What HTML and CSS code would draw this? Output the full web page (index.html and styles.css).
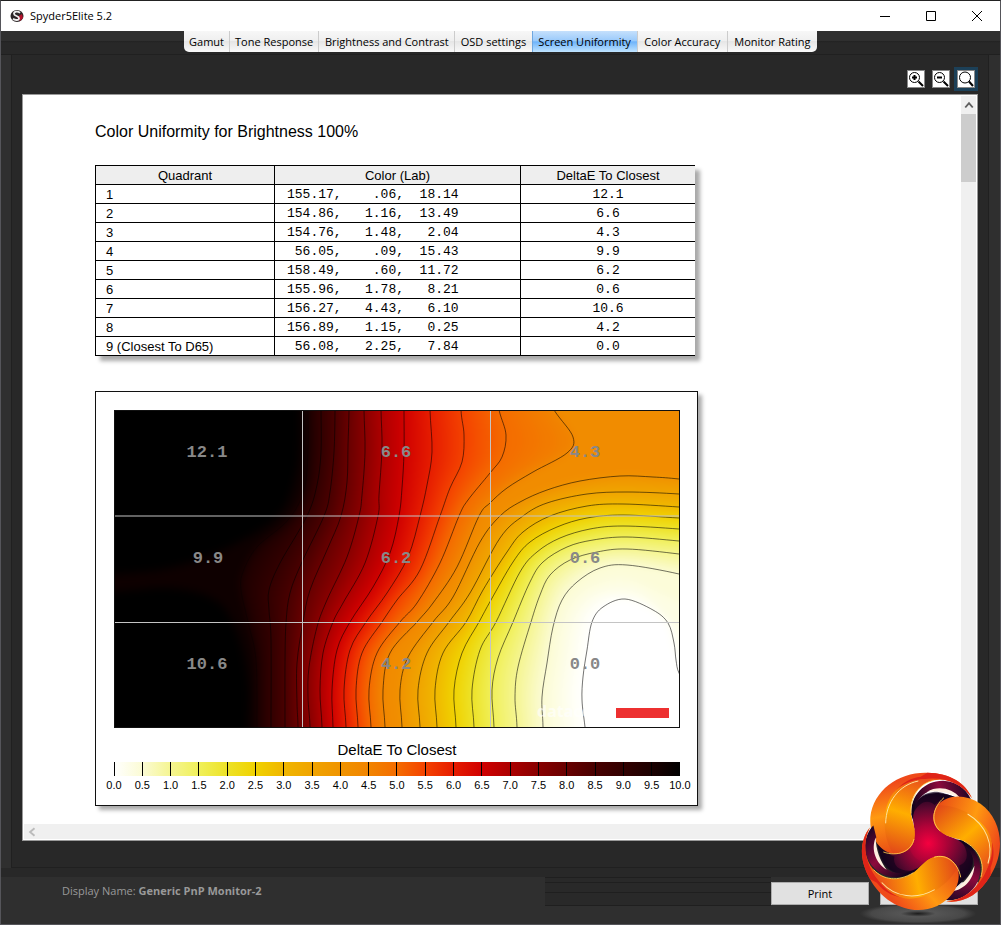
FILE: index.html
```html
<!DOCTYPE html>
<html lang="en">
<head>
<meta charset="utf-8">
<title>Spyder5Elite 5.2</title>
<link rel="stylesheet" href="styles.css">
</head>
<body>
<div class="window">
  <header class="titlebar">
    <svg class="app-icon" viewBox="0 0 14 14" aria-hidden="true">
      <ellipse cx="7" cy="7" rx="6.5" ry="6" fill="#2b2526"/>
      <path d="M7 8l5-3 1 4-3 3z" fill="#b3122c"/>
      <path d="M10 3.8C8 2 4 2.3 4 4.8C4 7.5 9 6.5 9 9.2C9 11.5 5 11.5 3 9.8" fill="none" stroke="#eee" stroke-width="1.8"/>
    </svg>
    <h1 class="app-name">Spyder5Elite 5.2</h1>
    <div class="window-controls">
      <button type="button" aria-label="Minimize"><svg viewBox="0 0 12 12"><path d="M1 6.5h10"/></svg></button>
      <button type="button" aria-label="Maximize"><svg viewBox="0 0 12 12"><path d="M1.5 1.5h9v9h-9z"/></svg></button>
      <button type="button" aria-label="Close"><svg viewBox="0 0 12 12"><path d="M1 1l10 10M11 1L1 11"/></svg></button>
    </div>
  </header>

  <nav class="tabbar">
    <div class="tabs">
      <button type="button">Gamut</button>
      <button type="button">Tone Response</button>
      <button type="button">Brightness and Contrast</button>
      <button type="button">OSD settings</button>
      <button type="button" class="active">Screen Uniformity</button>
      <button type="button">Color Accuracy</button>
      <button type="button">Monitor Rating</button>
    </div>
  </nav>

  <main class="panel">
    <div class="zoom-tools">
      <button type="button" aria-label="Zoom in"><svg viewBox="0 0 16 16"><circle cx="6.5" cy="6.5" r="5"/><path d="M4 6.5h5M6.5 4v5" stroke-width="2"/><path d="M10.5 10.5l4.5 4.5" stroke-width="2"/></svg></button>
      <button type="button" aria-label="Zoom out"><svg viewBox="0 0 16 16"><circle cx="6.5" cy="6.5" r="5"/><path d="M4 6.5h5" stroke-width="2"/><path d="M10.5 10.5l4.5 4.5" stroke-width="2"/></svg></button>
      <button type="button" class="selected" aria-label="Actual size"><svg viewBox="0 0 16 16"><circle cx="7" cy="6.5" r="5.5"/><path d="M11 10.5l4 4.5" stroke-width="2"/></svg></button>
    </div>

    <div class="viewer">
      <div class="report">
        <h2>Color Uniformity for Brightness 100%</h2>
        <table class="results">
          <thead><tr><th>Quadrant</th><th>Color (Lab)</th><th>DeltaE To Closest</th></tr></thead>
          <tbody>
            <tr><td>1</td><td>155.17,    .06,  18.14</td><td>12.1</td></tr>
            <tr><td>2</td><td>154.86,   1.16,  13.49</td><td>6.6</td></tr>
            <tr><td>3</td><td>154.76,   1.48,   2.04</td><td>4.3</td></tr>
            <tr><td>4</td><td> 56.05,    .09,  15.43</td><td>9.9</td></tr>
            <tr><td>5</td><td>158.49,    .60,  11.72</td><td>6.2</td></tr>
            <tr><td>6</td><td>155.96,   1.78,   8.21</td><td>0.6</td></tr>
            <tr><td>7</td><td>156.27,   4.43,   6.10</td><td>10.6</td></tr>
            <tr><td>8</td><td>156.89,   1.15,   0.25</td><td>4.2</td></tr>
            <tr><td>9 (Closest To D65)</td><td> 56.08,   2.25,   7.84</td><td>0.0</td></tr>
          </tbody>
        </table>

        <figure class="chart">
          <svg class="plot" viewBox="114 410 566 318" role="img" aria-label="DeltaE To Closest">
            <defs>
              <filter id="soften" filterUnits="userSpaceOnUse" x="60" y="350" width="700" height="440" color-interpolation-filters="sRGB"><feGaussianBlur stdDeviation="4"/></filter>
            </defs>
            <rect x="114" y="410" width="566" height="318" fill="#000"/>
            <g id="field" filter="url(#soften)"></g>
            <g id="contours" fill="none" stroke="#000" stroke-opacity=".55"></g>
            <path d="M302.5 411v316M490.5 411v316M115 516h564M115 622.5h564" stroke="#c4c4c4" fill="none"/>
            <g class="plot-values">
              <text x="207" y="457">12.1</text><text x="396" y="457">6.6</text><text x="585" y="457">4.3</text>
              <text x="208" y="563">9.9</text><text x="396" y="563">6.2</text><text x="585" y="563">0.6</text>
              <text x="207" y="669">10.6</text><text x="396" y="669">4.2</text><text x="585" y="669">0.0</text>
            </g>
            <text class="brand" x="537" y="717">datacolor</text>
            <rect x="616" y="708" width="53" height="10" fill="#ed3030"/>
            <rect x="114.5" y="410.5" width="565" height="317" fill="none" stroke="#111"/>
          </svg>
          <figcaption>DeltaE To Closest</figcaption>
          <div class="scale">
            <ul>
              <li>0.0</li><li>0.5</li><li>1.0</li><li>1.5</li><li>2.0</li><li>2.5</li><li>3.0</li>
              <li>3.5</li><li>4.0</li><li>4.5</li><li>5.0</li><li>5.5</li><li>6.0</li><li>6.5</li>
              <li>7.0</li><li>7.5</li><li>8.0</li><li>8.5</li><li>9.0</li><li>9.5</li><li>10.0</li>
            </ul>
          </div>
        </figure>
      </div>
      <div class="scroll-y"><svg viewBox="0 0 8 8"><path d="M1 6l3-3.5L7 6"/></svg><div class="thumb"></div></div>
      <div class="scroll-x"><svg viewBox="0 0 8 8"><path d="M6 1L2.5 4L6 7"/></svg></div>
    </div>
  </main>

  <footer class="footer">
    <p class="display-name">Display Name: <strong>Generic PnP Monitor-2</strong></p>
    <div class="grooves"></div>
    <div class="actions"><button type="button">Print</button><button type="button" aria-label="Close"></button></div>
  </footer>

  <svg class="emblem" viewBox="0 0 453 480" aria-hidden="true">
    <defs>
      <radialGradient id="shade"><stop offset="0" stop-color="#1c1c1c"/><stop offset=".3" stop-color="#555"/><stop offset=".8" stop-color="#484848"/><stop offset="1" stop-color="#444" stop-opacity="0"/></radialGradient>
      <radialGradient id="core" gradientUnits="userSpaceOnUse" cx="235" cy="235" r="150"><stop offset="0" stop-color="#f5003f"/><stop offset=".35" stop-color="#b00338"/><stop offset=".7" stop-color="#5c0830"/><stop offset="1" stop-color="#16041e"/></radialGradient>
      <linearGradient id="band" gradientUnits="userSpaceOnUse" x1="190" y1="130" x2="365" y2="90"><stop offset="0" stop-color="#12031c"/><stop offset=".5" stop-color="#8c0a3c"/><stop offset="1" stop-color="#1a0524"/></linearGradient>
      <linearGradient id="flameB" gradientUnits="userSpaceOnUse" x1="90" y1="60" x2="130" y2="265"><stop offset="0" stop-color="#ef4a1a"/><stop offset=".45" stop-color="#ff9a10"/><stop offset="1" stop-color="#e94c16"/></linearGradient>
      <linearGradient id="flameC" gradientUnits="userSpaceOnUse" x1="200" y1="30" x2="125" y2="260"><stop offset="0" stop-color="#e84a1c"/><stop offset=".5" stop-color="#ffae00"/><stop offset="1" stop-color="#e34a18"/></linearGradient>
      <g id="arm"><path d="M190 250C203 205 185 170 188 145C192 92 244 62 335 104C292 103 258 125 256 165C255 196 280 222 310 236L238 250Z" fill="url(#core)"/><path d="M188 150C190 108 215 80 262 80C285 84 310 94 330 102C290 98 268 104 254 120C232 100 204 112 188 150Z" fill="#14031c" fill-opacity=".7"/></g>
      <g id="petal">
        <path d="M184 150C180 90 225 46 280 47C328 50 357 80 366 112L331 102C312 77 270 64 234 80C205 93 190 125 189 165Z" fill="url(#band)"/>
        <path d="M231 80C263 62 307 68 331 100C300 82 262 76 231 80Z" fill="#fff0e0"/>
        <path d="M130 267C85 257 58 213 61 157C70 74 148 20 232 23C300 24 348 54 366 100C335 55 293 39 251 46C210 55 180 91 182 139C184 170 199 190 193 222C187 253 160 269 130 267Z" fill="url(#flameB)"/>
        <path d="M232 23C300 24 348 54 366 100C333 48 263 27 190 49C150 63 118 100 108 145C118 87 155 42 212 35Z" fill="#df2418"/>
        <path d="M130 267C92 210 94 105 146 68C180 43 222 38 251 46C210 55 180 91 182 139C184 170 199 190 193 222C187 253 160 269 130 267Z" fill="url(#flameC)"/>
        <path d="M107 175C108 112 146 60 205 48" fill="none" stroke="#ffe3a0" stroke-width="3"/>
        <path d="M100 261C142 276 184 260 192 222M183 145C181 91 210 55 251 46" fill="none" stroke="#ffcf50" stroke-width="2.5"/>
      </g>
    </defs>
    <ellipse cx="204" cy="446" rx="175" ry="30" fill="url(#shade)"/>
    <use href="#arm"/><use href="#arm" transform="rotate(120 238 232)"/><use href="#arm" transform="rotate(240 238 232)"/>
    <circle cx="235" cy="235" r="58" fill="url(#core)"/>
    <use href="#petal"/><use href="#petal" transform="rotate(120 238 232)"/><use href="#petal" transform="rotate(240 238 232)"/>
  </svg>
</div>
<script src="chart.js"></script>
</body>
</html>
```

FILE: chart.js
```js
// Each contour: DeltaE level followed by its x,y points, from the top or right edge to the bottom edge.
const contours = [
  [10, [300,370, 300,410, 300,440, 296,475, 278,516, 227,548, 170,568, 114,574, 80,574, 80,592, 114,592, 170,588, 215,600, 236,630, 248,680, 248,727, 248,770]],
  [9.5, [308,370, 308,410, 308,450, 304,490, 288,520, 257,547, 243,572, 241,590, 248,622, 256,660, 257,727, 257,770]],
  [9, [321,370, 321,410, 321,452, 317,485, 307,516, 280,563, 269,590, 269,610, 271,640, 271,727, 271,770]],
  [8.5, [335,370, 335,410, 334,452, 330,492, 324,516, 302,562, 290,593, 286,623, 285,663, 285,727, 285,770]],
  [8, [349,370, 349,410, 348,445, 347,482, 341,516, 327,550, 310,590, 303,622, 297,663, 297,703, 298,727, 298,770]],
  [7.5, [364,370, 364,410, 365,452, 362,495, 359,516, 347,557, 327,600, 317,627, 309,667, 308,697, 310,727, 310,770]],
  [7, [381,370, 381,410, 382,448, 379,495, 378,516, 365,563, 343,603, 333,622, 323,653, 320,690, 322,727, 322,770]],
  [6.5, [404,370, 404,410, 404,452, 402,488, 399,516, 390,553, 373,587, 350,622, 337,650, 332,690, 333,727, 333,770]],
  [6, [430,370, 430,410, 432,452, 427,485, 420,516, 408,557, 387,593, 366,622, 350,650, 344,690, 346,727, 346,770]],
  [5.5, [461,370, 461,410, 464,435, 462,462, 450,488, 440,516, 420,570, 397,600, 382,622, 362,653, 356,690, 358,727, 358,770]],
  [5, [490,370, 499,410, 506,435, 502,457, 490,473, 468,500, 459,516, 440,563, 417,603, 400,622, 377,653, 369,690, 371,727, 371,770]],
  [4.5, [530,370, 554,410, 573,437, 567,453, 533,472, 507,488, 490,503, 479,516, 457,567, 433,603, 417,622, 390,653, 383,690, 385,727, 385,770]],
  [4, [720,484, 679,479, 653,477, 620,476, 580,481, 547,490, 520,502, 500,516, 480,542, 453,597, 433,622, 408,657, 400,690, 402,727, 402,770]],
  [3.5, [720,498, 679,494, 627,492, 587,494, 547,503, 523,516, 500,538, 470,593, 449,622, 427,653, 418,690, 420,727, 420,770]],
  [3, [720,510, 679,507, 623,504, 587,506, 550,516, 523,532, 507,552, 483,590, 466,622, 443,653, 435,690, 437,727, 437,770]],
  [2.5, [720,520, 679,518, 623,515, 587,518, 557,527, 530,542, 513,562, 491,600, 479,622, 462,653, 454,690, 456,727, 456,770]],
  [2, [720,533, 679,529, 623,526, 590,529, 560,538, 537,552, 520,572, 496,622, 480,650, 472,690, 474,727, 474,770]],
  [1.5, [720,545, 679,541, 627,537, 593,540, 567,547, 543,562, 530,582, 513,622, 498,658, 492,690, 494,727, 494,770]],
  [1, [720,560, 679,554, 627,549, 597,552, 570,560, 550,575, 540,595, 531,622, 518,667, 515,697, 517,727, 517,770]],
  [0.5, [720,586, 679,574, 627,565, 600,568, 577,582, 562,600, 553,627, 547,663, 542,697, 543,727, 543,770]],
  [0, [720,720, 690,690, 679,673, 676,660, 674,643, 668,623, 653,610, 625,599, 603,607, 592,622, 587,650, 583,677, 582,700, 585,727, 590,770]]
];

const ramp = [
  [255,255,255], [251,251,212], [245,245,145], [240,240,90], [237,226,40], [240,210,0], [240,182,0],
  [240,164,0], [240,148,0], [241,132,0], [244,108,0], [244,66,0], [230,28,0], [208,0,0], [172,0,0],
  [136,0,0], [104,0,0], [72,0,0], [50,0,0], [28,0,0], [0,0,0]
];

function colour(level) {
  const pos = level * 2;
  const i = Math.min(19, Math.floor(pos));
  const t = pos - i;
  return `rgb(${ramp[i].map((c, k) => Math.round(c + (ramp[i + 1][k] - c) * t)).join(",")})`;
}

function toPath(flat) {
  const p = [];
  for (let i = 0; i < flat.length; i += 2) p.push([flat[i], flat[i + 1]]);
  let d = `M${p[0]}`;
  for (let i = 0; i < p.length - 1; i++) {
    const a = p[Math.max(0, i - 1)], b = p[i], c = p[i + 1], e = p[Math.min(p.length - 1, i + 2)];
    d += `C${b[0] + (c[0] - a[0]) / 6},${b[1] + (c[1] - a[1]) / 6} ${c[0] - (e[0] - b[0]) / 6},${c[1] - (e[1] - b[1]) / 6} ${c}`;
  }
  return d;
}

function addPath(parent, attrs) {
  const el = document.createElementNS("http://www.w3.org/2000/svg", "path");
  for (const key in attrs) el.setAttribute(key, attrs[key]);
  parent.appendChild(el);
  return el;
}

const field = document.getElementById("field");
const lines = document.getElementById("contours");
const samples = 80;

function sample(el) {
  const total = el.getTotalLength();
  return Array.from({ length: samples + 1 }, (_, i) => {
    const pt = el.getPointAtLength(total * i / samples);
    return [pt.x, pt.y];
  });
}

const curves = contours.map(([level, flat]) => {
  const el = addPath(lines, { d: toPath(flat) });
  const points = sample(el);
  if (level === 10) el.remove();
  if (level === 9.5) el.setAttribute("stroke-opacity", ".25");
  return { level, points };
});

curves.forEach(({ level, points }, i) => {
  const next = curves[i + 1];
  // Bands that run between the same two edges are graded in steps; the others are filled flat.
  const graded = next && level !== 10 && level !== 4.5;
  const steps = graded ? 4 : 1;
  for (let s = 0; s < steps; s++) {
    const t = s / steps;
    const band = points.map((p, k) => t ? [p[0] + (next.points[k][0] - p[0]) * t, p[1] + (next.points[k][1] - p[1]) * t] : p);
    const shade = level === 0 ? 0 : level - 0.5 * (t + 0.5 / steps);
    addPath(field, { d: `M${band.join("L")}L740,780L740,360Z`, fill: colour(shade) });
  }
});
```

FILE: styles.css
```css
* { box-sizing: border-box; }
body {
  margin: 0;
  background: #2f2f2f;
  color: #000;
  font: 11px/16px "Open Sans", "Noto Sans", sans-serif;
}
button { font: inherit; color: inherit; margin: 0; padding: 0; border: 0; background: none; }
h1, h2, p, ul, figure { margin: 0; padding: 0; font-weight: normal; }

.window {
  position: relative;
  display: flex;
  flex-direction: column;
  min-height: 100vh;
  border: 1px solid #55555a;
  border-top-color: #222;
}

.titlebar { display: flex; align-items: center; height: 30px; padding-left: 9px; background: #fff; }
.app-icon { width: 14px; height: 14px; }
.app-name { flex: 1; margin-left: 6px; font-size: 11px; }
.window-controls { display: flex; }
.window-controls button { width: 46px; height: 30px; display: grid; place-items: center; }
.window-controls svg { width: 12px; height: 12px; fill: none; stroke: #000; }

.tabbar {
  display: flex;
  justify-content: center;
  height: 24px;
  background: linear-gradient(#2f2f2f 10px, #222 10px, #282828 12px, #282828 23px, #202020 23px);
}
.tabs {
  display: grid;
  grid-template-columns: 45fr 89fr 136fr 77fr 105fr 90fr 90fr;
  width: 633px;
  height: 21px;
  overflow: hidden;
  border-radius: 0 0 5px 5px;
}
.tabs button {
  border-left: 1px solid #ccc;
  background: linear-gradient(#f7f7f7, #efefef 48%, #e6e6e6 50%, #f9f9f9);
  white-space: nowrap;
}
.tabs button:first-child { border-left: 0; }
.tabs .active { background: linear-gradient(#c5e0fc, #9ccbfb 45%, #6fb4fa 52%, #c0e4ff); border-color: #6ea7e0; }

.panel {
  flex: 1;
  display: flex;
  flex-direction: column;
  margin: 0 11px 0 10px;
  padding: 12px 10px 26px;
  border: 1px solid #202020;
  border-top: 0;
  background: #282828;
}
.zoom-tools { display: flex; justify-content: flex-end; gap: 1px; height: 27px; }
.zoom-tools button { height: 24px; padding: 3px; }
.zoom-tools svg { display: block; width: 18px; height: 18px; border: 1px solid #888; background: #fff; fill: none; stroke: #000; }
.zoom-tools .selected { background: #1c4058; }

.viewer {
  flex: 1;
  display: grid;
  grid-template: 1fr 15px / 1fr 15px;
  padding: 1px;
  border: 1px solid #999;
  background: #fff;
}
.report { padding: 26px 0 17px 71px; font-family: "Liberation Sans", Arial, sans-serif; }
.report h2 { font-size: 16px; line-height: 20px; }
.scroll-y, .scroll-x { background: #f0f0f0; }
.scroll-y svg { display: block; width: 10px; height: 18px; margin: 0 auto; fill: none; stroke: #606060; stroke-width: 1.5; }
.scroll-y .thumb { height: 68px; background: #cdcdcd; }
.scroll-x { grid-column: 1 / 3; display: flex; align-items: center; padding-left: 3px; }
.scroll-x svg { width: 10px; height: 10px; fill: none; stroke: #bbb; stroke-width: 1.5; }

.results {
  width: 600px;
  margin-top: 23px;
  border-collapse: collapse;
  table-layout: fixed;
  box-shadow: 5px 5px 4px #aaa;
  background: #fff;
  font-size: 13px;
  line-height: 17px;
}
.results th, .results td { height: 19px; padding: 1px 0 0; border: 1px solid #000; text-align: center; font-weight: normal; }
.results th { background: #eee; }
.results th:first-child { width: 179px; }
.results th:nth-child(2) { width: 246px; }
.results th:last-child, .results td:last-child { border-right: 0; }
.results td { font: 13px/17px "Liberation Mono", monospace; }
.results td:first-child { padding-left: 10px; text-align: left; font-family: "Liberation Sans", Arial, sans-serif; }
.results td:nth-child(2) { padding-left: 12px; text-align: left; white-space: pre; }

.chart {
  width: 603px;
  margin-top: 35px;
  padding: 18px 17px 10px 18px;
  border: 1px solid #111;
  background: #fff;
  box-shadow: 4px 4px 4px #aaa;
}
.plot { display: block; width: 100%; }
.plot-values { font: bold 17px "Liberation Mono", monospace; fill: #888; text-anchor: middle; }
.brand { font: bold 16px "Open Sans", sans-serif; fill: #fff; fill-opacity: .6; }
.chart figcaption { margin-top: 12px; text-align: center; font-size: 15px; line-height: 20px; }
.scale {
  margin-top: 2px;
  background: linear-gradient(to right, #fff, #fbfbd4 5%, #f5f591 10%, #f0f05a 15%, #ede228 20%, #f0d200 25%, #f0b600 30%, #f0a400 35%, #f09400 40%, #f18400 45%, #f46c00 50%, #f44200 55%, #e61c00 60%, #d00000 65%, #ac0000 70%, #880000 75%, #680000 80%, #480000 85%, #320000 90%, #1c0000 95%, #000) no-repeat;
  background-size: 100% 14px;
}
.scale ul { display: flex; justify-content: space-between; margin: 0 -14px; list-style: none; }
.scale li { width: 28px; text-align: center; font-size: 11px; line-height: 19px; }
.scale li::before { content: ""; display: block; width: 1px; height: 14px; margin: 0 auto; background: #000; }

.footer {
  display: flex;
  height: 56px;
  padding: 0 22px 0 61px;
  background: linear-gradient(#282828 9px, #2f2f2f 9px);
}
.display-name { flex: 1; padding-top: 15px; color: #999; }
.grooves {
  width: 226px;
  height: 29px;
  margin-top: 9px;
  background: linear-gradient(#1f1f1f 1px, #292929 1px 5px, #1f1f1f 5px 6px, #292929 6px 15px, #1f1f1f 15px 16px, #292929 16px 28px, #1f1f1f 28px);
}
.actions { display: flex; gap: 11px; padding-top: 14px; }
.actions button { width: 98px; height: 23px; border: 1px solid #adadad; background: #e1e1e1; }

.emblem { position: absolute; right: -1px; bottom: -1px; width: 151px; height: 160px; }
```
